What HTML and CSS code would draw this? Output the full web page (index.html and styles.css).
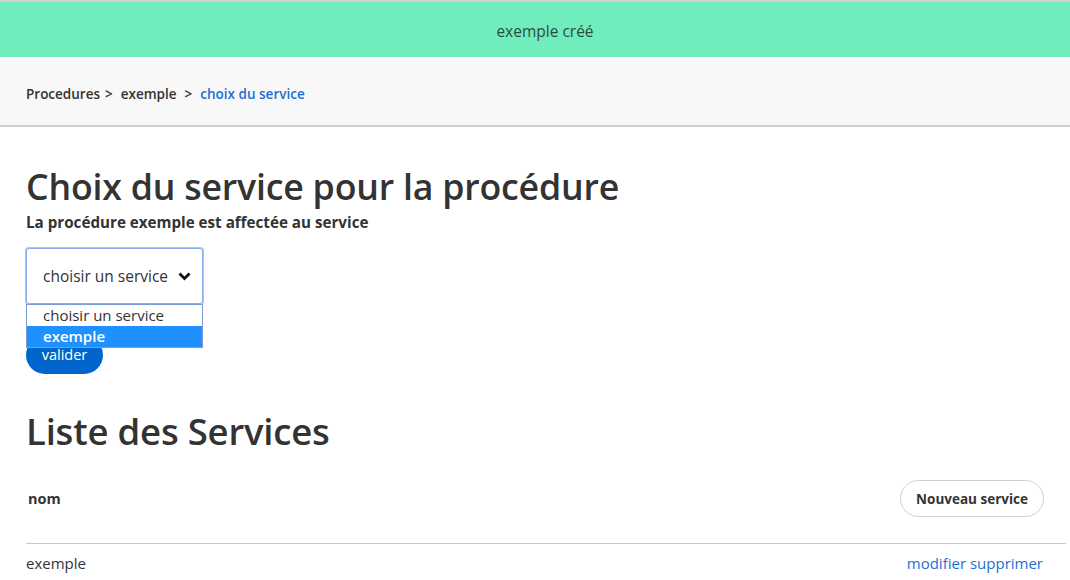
FILE: index.html
```html
<!DOCTYPE html>
<html lang="fr">
<head>
<meta charset="utf-8">
<title>Choix du service</title>
<link rel="stylesheet" href="styles.css">
</head>
<body>
<div class="flash">exemple créé</div>
<nav class="breadcrumb">
  <span class="crumb">Procedures</span><span class="sep">&gt;</span>
  <span class="crumb">exemple</span><span class="sep sep-wide">&gt;</span>
  <span class="crumb current">choix du service</span>
</nav>
<main class="content">
  <h1 class="title">Choix du service pour la procédure</h1>
  <p class="subtitle">La procédure exemple est affectée au service</p>
  <form class="service-form">
    <div class="select-wrap">
      <div class="select">
        <span>choisir un service</span>
        <svg class="chevron" width="13" height="9" viewBox="0 0 13 9"><polyline points="1.5,1.5 6.5,6.5 11.5,1.5" fill="none" stroke="#111" stroke-width="2.8"/></svg>
      </div>
      <ul class="options">
        <li class="option">choisir un service</li>
        <li class="option selected">exemple</li>
      </ul>
    </div>
    <button type="button" class="btn-primary">valider</button>
  </form>
  <h2 class="title list-title">Liste des Services</h2>
  <div class="table">
    <div class="table-head">
      <span class="col-name">nom</span>
      <button type="button" class="btn-outline">Nouveau service</button>
    </div>
    <div class="table-row">
      <span>exemple</span>
      <span class="actions"><a href="#">modifier</a> <a href="#">supprimer</a></span>
    </div>
  </div>
</main>
</body>
</html>
```

FILE: styles.css
```css
* { box-sizing: border-box; }
body {
  margin: 0;
  font-family: "Open Sans", "Noto Sans", sans-serif;
  color: #333;
  background: #fff;
}
.flash {
  border-top: 2px solid #cfcfcf;
  background: #6fedbd;
  height: 57px;
  display: flex;
  align-items: center;
  justify-content: center;
  font-size: 15.5px;
  color: #2f4a3e;
  padding: 2px 0 0 20px;
}
.breadcrumb {
  background: #f8f8f8;
  height: 70px;
  border-bottom: 2px solid #cfcfcf;
  display: flex;
  align-items: center;
  padding: 5px 0 0 26px;
  font-size: 13.5px;
  font-weight: 600;
  color: #333;
}
.sep { margin: 0 8px 0 5px; }
.sep-wide { margin: 0 8px 0 8px; }
.current { color: #1a6fd6; }
.content { padding: 0 4px 0 26px; }
.title {
  font-size: 35.7px;
  font-weight: 600;
  margin: 37px 0 0;
  line-height: 44px;
  color: #333;
  letter-spacing: -0.2px;
}
.subtitle {
  margin: 4px 0 0;
  font-size: 15.2px;
  font-weight: 700;
  line-height: 20px;
}
.service-form { margin-top: 16px; }
.select-wrap { position: relative; width: 177px; }
.select {
  height: 56px;
  border: 1px solid #8ab0f0;
  border-radius: 3px;
  box-shadow: 0 0 0 1px #a8c4f6;
  display: flex;
  align-items: center;
  justify-content: space-between;
  padding: 0 11px 0 16px;
  font-size: 15.5px;
  color: #333;
  background: #fff;
}
.chevron { display: block; }
.options {
  position: absolute;
  top: 56px;
  left: 0;
  width: 177px;
  margin: 0;
  padding: 0;
  list-style: none;
  border: 1px solid #7a9bd8;
  background: #fff;
  z-index: 2;
}
.option {
  height: 21px;
  line-height: 21px;
  padding-left: 16px;
  font-size: 15px;
  color: #333;
  overflow: hidden;
}
.option.selected { background: #1e90ff; color: #fff; font-weight: 600; }
.btn-primary {
  display: block;
  margin-top: 32px;
  width: 77px;
  height: 38px;
  border: none;
  border-radius: 19px;
  background: #0066cc;
  color: #fff;
  font-family: inherit;
  font-size: 14.5px;
  padding: 0 0 2px;
  text-align: center;
}
.list-title { margin-top: 35px; font-size: 36.5px; }
.table { margin-top: 27px; }
.table-head {
  display: flex;
  align-items: center;
  justify-content: space-between;
  padding: 0 22px 26px 2px;
  border-bottom: 1px solid #c8c8c8;
}
.col-name { font-size: 14.5px; font-weight: 700; }
.btn-outline {
  height: 37px;
  padding: 0 15px;
  border: 1px solid #cfcfcf;
  border-radius: 19px;
  background: #fff;
  font-family: inherit;
  font-size: 13.5px;
  font-weight: 700;
  color: #333;
}
.table-row {
  display: flex;
  justify-content: space-between;
  align-items: center;
  padding: 9px 23px 0 0;
  font-size: 15px;
}
.actions a { color: #1a6fd6; text-decoration: none; }
```
